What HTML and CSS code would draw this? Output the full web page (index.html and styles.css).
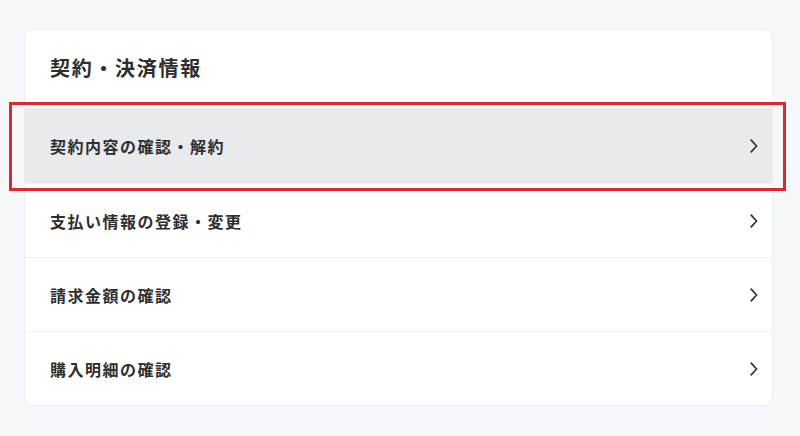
FILE: index.html
```html
<!DOCTYPE html>
<html lang="ja">
<head>
<meta charset="utf-8">
<link rel="stylesheet" href="styles.css">
</head>
<body>
<div class="card">
  <h2 class="title">契約・決済情報</h2>
  <ul class="list">
    <li class="item active">
      <span class="label">契約内容の確認・解約</span>
      <svg class="chev" width="8" height="14" viewBox="0 0 8 14"><path d="M1.2 1.2 L6.6 7 L1.2 12.8" fill="none" stroke="#333" stroke-width="1.7" stroke-linecap="round" stroke-linejoin="round"/></svg>
    </li>
    <li class="item">
      <span class="label">支払い情報の登録・変更</span>
      <svg class="chev" width="8" height="14" viewBox="0 0 8 14"><path d="M1.2 1.2 L6.6 7 L1.2 12.8" fill="none" stroke="#333" stroke-width="1.7" stroke-linecap="round" stroke-linejoin="round"/></svg>
    </li>
    <li class="item">
      <span class="label">請求金額の確認</span>
      <svg class="chev" width="8" height="14" viewBox="0 0 8 14"><path d="M1.2 1.2 L6.6 7 L1.2 12.8" fill="none" stroke="#333" stroke-width="1.7" stroke-linecap="round" stroke-linejoin="round"/></svg>
    </li>
    <li class="item">
      <span class="label">購入明細の確認</span>
      <svg class="chev" width="8" height="14" viewBox="0 0 8 14"><path d="M1.2 1.2 L6.6 7 L1.2 12.8" fill="none" stroke="#333" stroke-width="1.7" stroke-linecap="round" stroke-linejoin="round"/></svg>
    </li>
  </ul>
</div>
</body>
</html>
```
FILE: styles.css
```css
* { box-sizing: border-box; }
html, body { margin: 0; }
body {
  background: #f5f7fa;
  padding: 29px 27px 0 24px;
  font-family: "Noto Sans CJK JP", "Noto Sans", sans-serif;
  color: #2e2e2e;
}
.card {
  background: #fff;
  border-radius: 8px;
  border: 1px solid #eceef1;
  width: 749px;
}
.title {
  margin: 0;
  height: 78px;
  padding: 0 0 3px 25px;
  display: flex;
  align-items: center;
  font-size: 20px;
  font-weight: 700;
  letter-spacing: 1.7px;
}
.list {
  list-style: none;
  margin: 0;
  padding: 0;
}
.item {
  position: relative;
  display: flex;
  align-items: center;
  justify-content: space-between;
  height: 74px;
  padding: 0 14px 0 25px;
  border-top: 1px solid #eef0f3;
}
.item:first-child { border-top: none; height: 75px; }
.label {
  font-size: 16px;
  font-weight: 700;
  letter-spacing: 1.5px;
}
.active { background: #e8eaed; }
.active::after {
  content: "";
  position: absolute;
  top: -6px;
  bottom: -8px;
  left: -16px;
  right: -14px;
  border: 3px solid #da2a2e;
}
.chev { display: block; }
```
